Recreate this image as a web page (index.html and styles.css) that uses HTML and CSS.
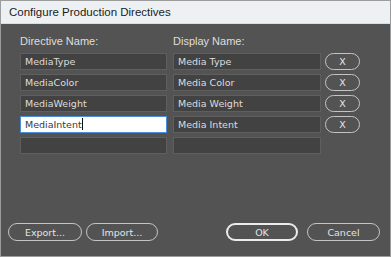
FILE: index.html
```html
<!DOCTYPE html>
<html lang="en">
<head>
    <meta charset="UTF-8">
    <title>Configure Production Directives</title>
    <link rel="stylesheet" href="styles.css">
</head>
<body>
    <div class="dialog">
        <div class="title-bar">Configure Production Directives</div>

        <div class="content">
            <div class="row labels">
                <span class="col-name">Directive Name:</span>
                <span class="col-display">Display Name:</span>
            </div>

            <div class="rows">
                <div class="row">
                    <div class="field col-name">MediaType</div>
                    <div class="field col-display">Media Type</div>
                    <button class="pill remove">X</button>
                </div>
                <div class="row">
                    <div class="field col-name">MediaColor</div>
                    <div class="field col-display">Media Color</div>
                    <button class="pill remove">X</button>
                </div>
                <div class="row">
                    <div class="field col-name">MediaWeight</div>
                    <div class="field col-display">Media Weight</div>
                    <button class="pill remove">X</button>
                </div>
                <div class="row">
                    <div class="field col-name focused">MediaIntent<span class="caret"></span></div>
                    <div class="field col-display">Media Intent</div>
                    <button class="pill remove">X</button>
                </div>
                <div class="row">
                    <div class="field col-name"></div>
                    <div class="field col-display"></div>
                </div>
            </div>
        </div>

        <div class="footer">
            <div class="group">
                <button class="pill export">Export...</button>
                <button class="pill import">Import...</button>
            </div>
            <div class="group">
                <button class="pill ok">OK</button>
                <button class="pill cancel">Cancel</button>
            </div>
        </div>
    </div>
</body>
</html>
```

FILE: styles.css
```css
* {
    margin: 0;
    padding: 0;
    box-sizing: border-box;
    font-family: 'Liberation Sans', Arial, sans-serif;
}

body {
    background: #535353;
}

.dialog {
    width: 391px;
    height: 257px;
    border: 1px solid #9c9c9c;
    background: #535353;
    display: flex;
    flex-direction: column;
}

.title-bar {
    height: 23px;
    background: #eef1f4;
    color: #1b1b1b;
    font-size: 11.5px;
    line-height: 23px;
    padding-left: 8px;
    border-bottom: 1px solid #d9dde2;
}

.content {
    padding: 10px 0 0 19px;
}

.row {
    display: flex;
    align-items: center;
}

.labels {
    color: #dedede;
    font-size: 11px;
    line-height: 14px;
    margin-bottom: 5px;
}

.col-name {
    width: 147px;
    margin-right: 6px;
}

.col-display {
    width: 148px;
    margin-right: 4px;
}

.rows {
    display: flex;
    flex-direction: column;
    gap: 4px;
}

.field {
    height: 17px;
    background: #424242;
    border: 1px solid #5f5f5f;
    color: #dddddd;
    font-family: 'DejaVu Sans', Verdana, sans-serif;
    font-size: 9.5px;
    line-height: 15px;
    padding-left: 4px;
}

.field.focused {
    background: #ffffff;
    border-color: #4d8fd6;
    color: #3a3a3a;
}

.caret {
    display: inline-block;
    width: 1px;
    height: 12px;
    background: #111;
    vertical-align: -2px;
}

.pill {
    background: transparent;
    border: 1px solid #c4c4c4;
    color: #e4e4e4;
    font-family: 'DejaVu Sans', Verdana, sans-serif;
    font-size: 9.5px;
    cursor: pointer;
}

.remove {
    width: 35px;
    height: 17px;
    border-radius: 9px;
}

.footer {
    margin-top: auto;
    padding: 0 10px 15px 7px;
    display: flex;
    justify-content: space-between;
}

.group {
    display: flex;
}

.footer .pill {
    height: 18px;
    border-radius: 9px;
}

.export {
    width: 74px;
    margin-right: 4px;
}

.import {
    width: 72px;
}

.ok {
    width: 72px;
    margin-right: 9px;
    border: 2px solid #ececec;
}

.cancel {
    width: 73px;
}
```
